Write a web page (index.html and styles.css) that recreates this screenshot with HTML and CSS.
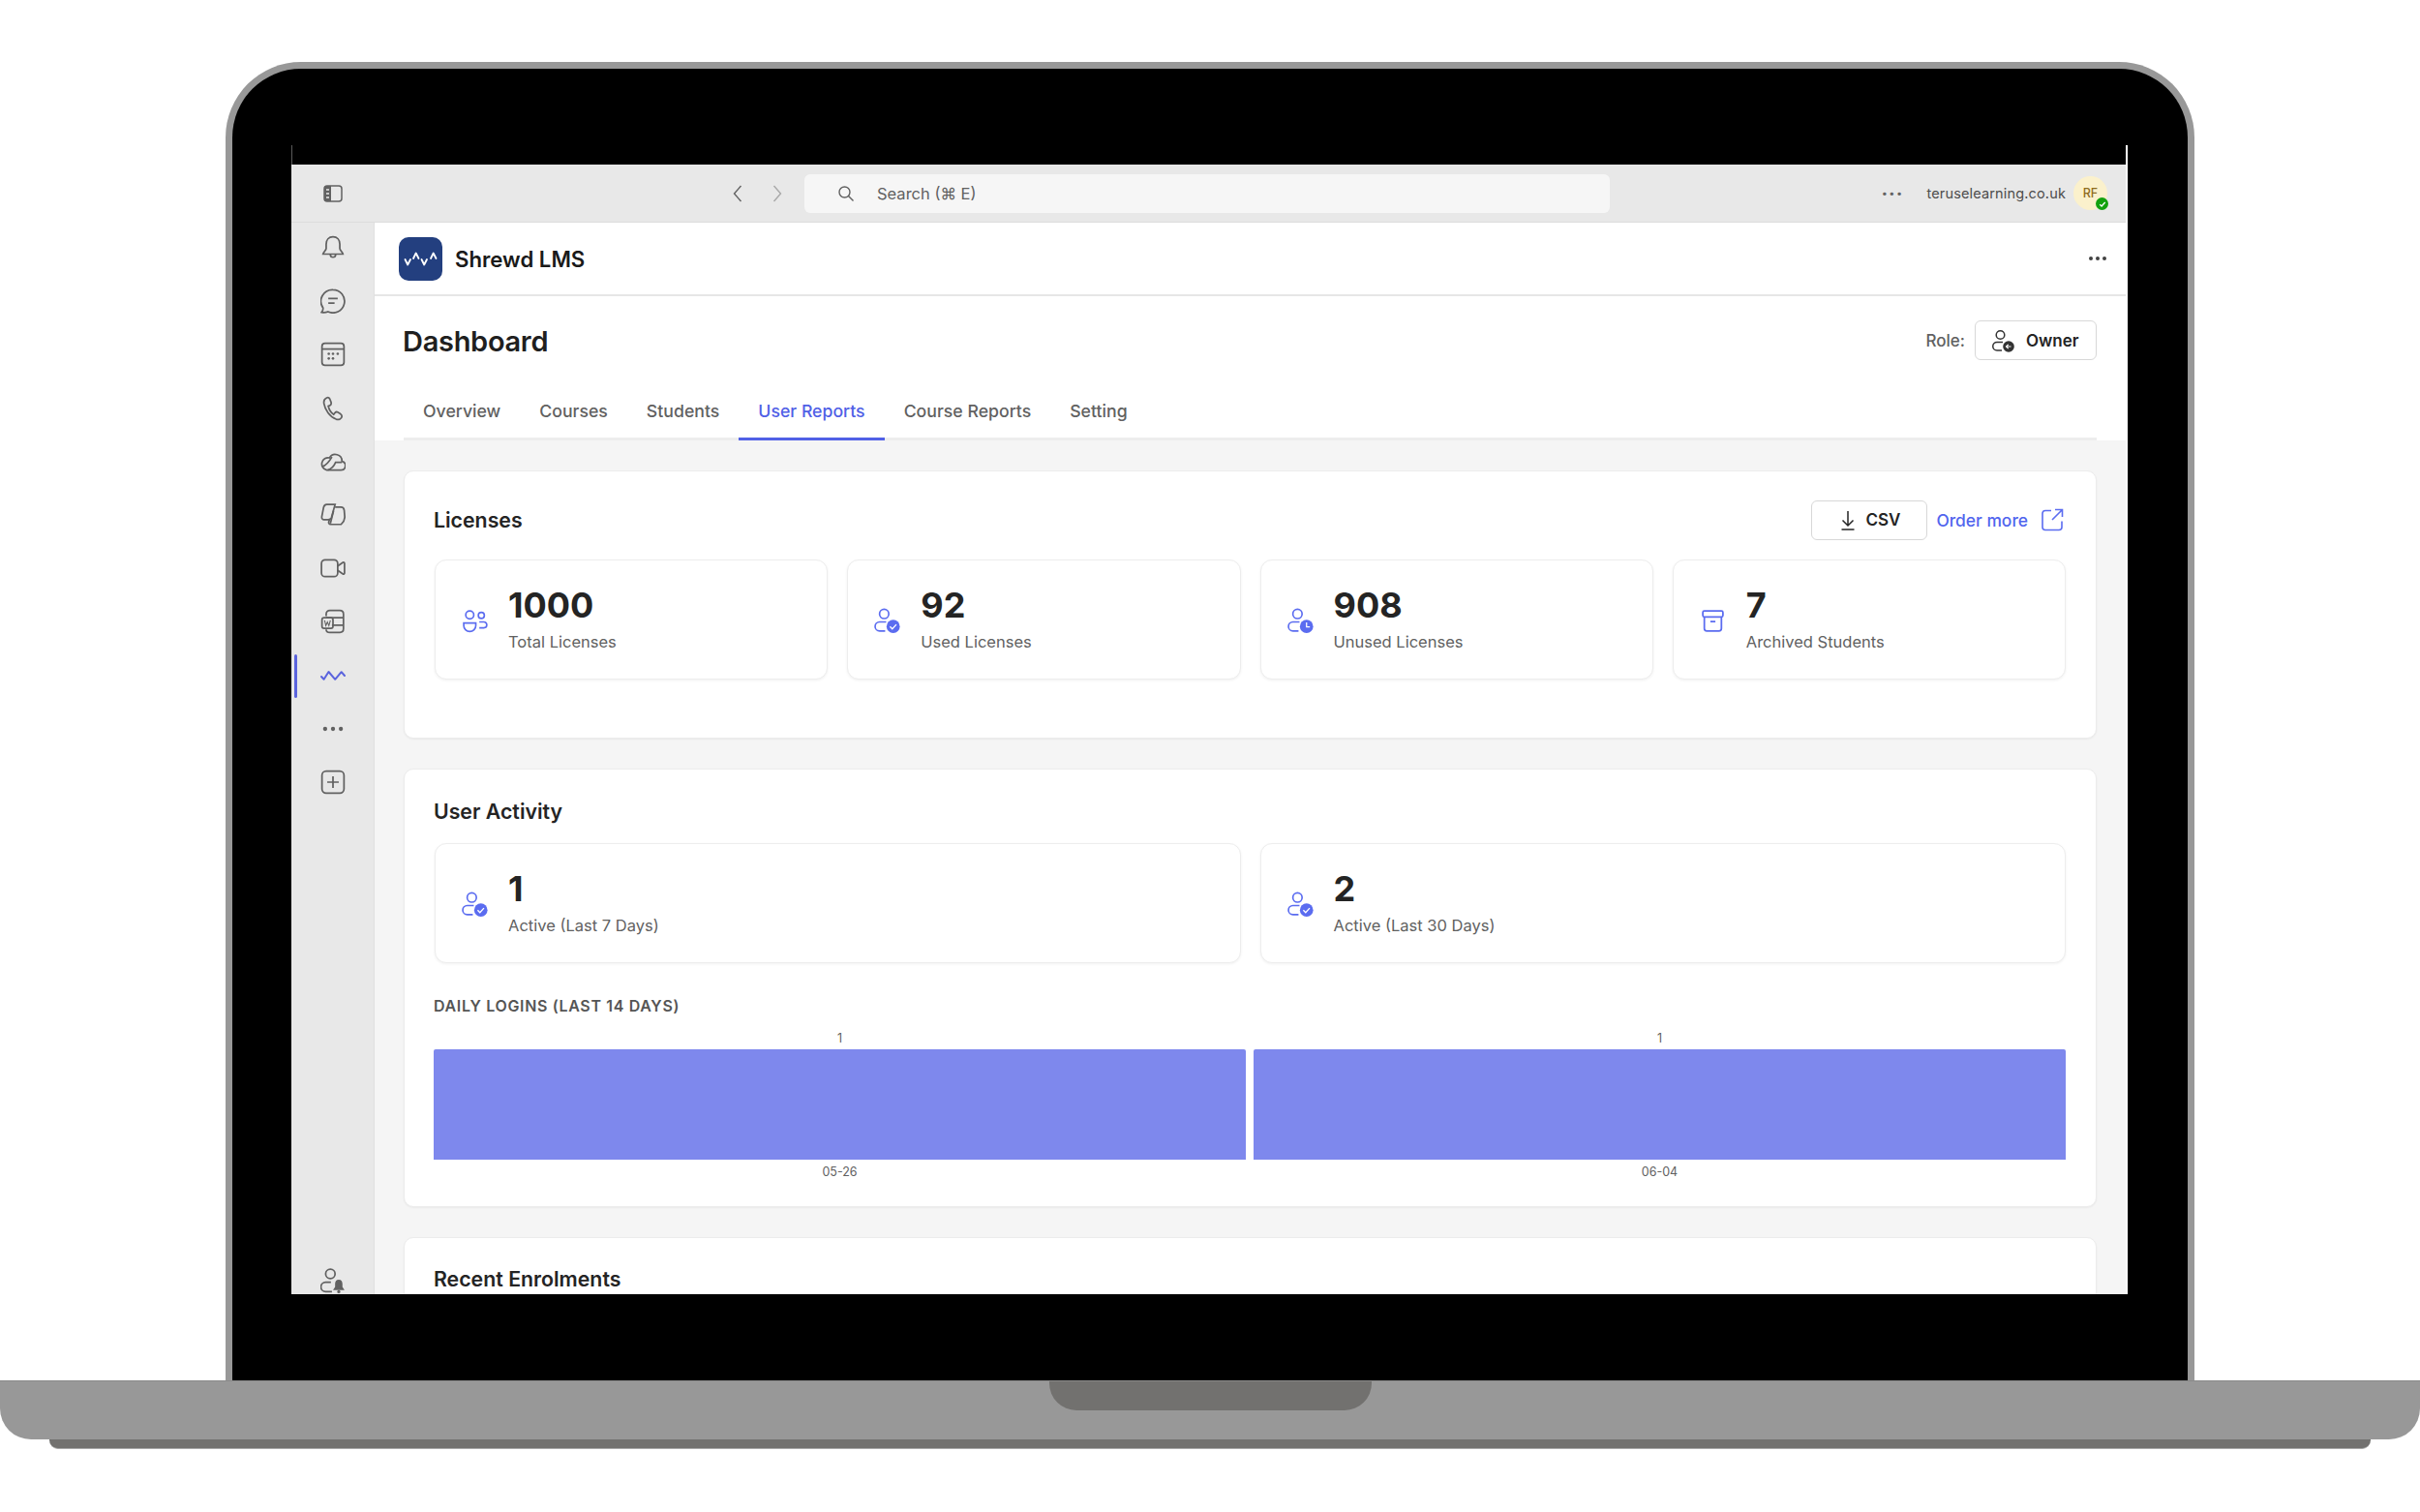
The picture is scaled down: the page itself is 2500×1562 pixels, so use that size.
FILE: index.html
```html
<!DOCTYPE html>
<html lang="en">
<head>
<meta charset="utf-8">
<title>Shrewd LMS</title>
<link rel="stylesheet" href="styles.css">
</head>
<body>
<svg class="defs" width="0" height="0" aria-hidden="true">
  <symbol id="user-check" viewBox="0 0 26 26">
    <circle cx="10" cy="6" r="4.6" fill="none" stroke="currentColor" stroke-width="1.6"/>
    <path d="M12 14H5.500a3.800 3.800 0 0 0 0 9H11" fill="none" stroke="currentColor" stroke-width="1.6"/>
    <circle cx="19" cy="18.500" r="6.600" fill="currentColor"/>
    <path d="M15.800 18.600l2.300 2.300 4-4.400" fill="none" stroke="#fff" stroke-width="1.300"/>
  </symbol>
</svg>
<div class="laptop">
  <div class="lid">
    <div class="camera-strip"></div>
    <div class="app">
      <header class="topbar">
        <div class="top-left">
          <div class="panel-toggle">
            <svg width="20" height="18" viewBox="0 0 20 18"><rect x="1" y="1" width="18" height="16" rx="3" fill="none" stroke="#616161" stroke-width="1.5"/><path d="M3 1h5v16H3a2 2 0 0 1-2-2V3a2 2 0 0 1 2-2z" fill="#616161"/><path d="M3 5h3M3 9h3M3 13h3" stroke="#e8e8e8" stroke-width="1.3"/></svg>
          </div>
          <div class="history">
            <svg width="12" height="20" viewBox="0 0 12 20"><path d="M9.500 2L2.500 10l7 8" fill="none" stroke="#616161" stroke-width="1.4"/></svg>
            <svg width="12" height="20" viewBox="0 0 12 20"><path d="M2.500 2l7 8-7 8" fill="none" stroke="#a8a8a8" stroke-width="1.4"/></svg>
          </div>
        </div>
        <div class="search">
          <svg width="18" height="18" viewBox="0 0 18 18"><circle cx="7.500" cy="7.500" r="5.500" fill="none" stroke="#616161" stroke-width="1.4"/><path d="M11.500 11.500l5 5" stroke="#616161" stroke-width="1.4"/></svg>
          <span>Search (⌘ E)</span>
        </div>
        <div class="top-right">
          <span class="thin-dots">···</span>
          <span class="tenant">teruselearning.co.uk</span>
          <div class="avatar">RF
            <span class="presence"><svg width="8" height="8" viewBox="0 0 8 8"><path d="M1.200 4.200l1.900 1.800 3.600-4" fill="none" stroke="#fff" stroke-width="1.3"/></svg></span>
          </div>
        </div>
      </header>
      <div class="body">
        <nav class="rail">
          <svg class="rail-icon" viewBox="0 0 24 24"><path d="M12 1.500c-4 0-6.500 3-6.500 7v4.200c0 1.600-2.500 3.300-3 5.300h19c-.5-2-3-3.700-3-5.300V8.500c0-4-2.500-7-6.500-7z"/><path d="M9.500 18.500a2.500 2.500 0 0 0 5 0"/></svg>
          <svg class="rail-icon" viewBox="0 0 24 24"><path d="M12 1.200a11 11 0 1 1-4.800 20.900c-2 .9-4 1-6 .6 1-1.300 1.500-2.800 1.300-4.200A11 11 0 0 1 12 1.200z"/><path d="M7.500 9.500h9M7.500 14h6"/></svg>
          <svg class="rail-icon" viewBox="0 0 24 24"><rect x="1.500" y="1.500" width="21" height="21" rx="3"/><path d="M1.500 7h21"/><g class="solid"><circle cx="8" cy="11.500" r="1.200"/><circle cx="12" cy="11.500" r="1.200"/><circle cx="16.500" cy="11.500" r="1.200"/><circle cx="8" cy="16" r="1.200"/><circle cx="12" cy="16" r="1.200"/></g></svg>
          <svg class="rail-icon" viewBox="0 0 24 24"><path d="M6 1.800c-2.200 1-3 3-2.600 5.500C4.300 13 9 20 15 22.200c2.500.8 5.300-.2 5.500-2.700.1-1.300-.8-2-1.800-2.700l-2.300-1.300c-1.200-.6-2.200 0-2.800 1l-.9 1.200c-2.500-1.500-4.500-5-5.200-8l1.500-.6c1.200-.6 1.500-1.800 1.200-3L9 3c-.5-1-1.700-1.800-3-1.200z"/></svg>
          <svg class="rail-icon" viewBox="0 0 24 24"><path d="M6 20h13.500a4.200 4.200 0 0 0 1-8.300 6.300 6.300 0 0 0-11.800-3.400A6 6 0 0 0 6 20z"/><path d="M2 16.500c3-.8 6-4 9-9M7 20c3-1 6-4 7.500-7.500l6 0"/></svg>
          <svg class="rail-icon" viewBox="0 0 24 24"><path d="M6 2h8l-3.500 12.500c-.5 1.500-1.500 2-3 2H3.500c-1.500 0-2.500-1.200-2.200-2.700L3 5c.4-2 1.500-3 3-3z"/><path d="M14 4.500h5.500c1.700 0 3 1.300 3.200 3l.5 6c.2 3-1 5-3.500 7.500h-10c-1.500 0-2-1.200-1.700-2.500l1-3"/><path d="M12.500 8l-3 12"/></svg>
          <svg class="rail-icon" viewBox="0 0 24 24"><rect x="1" y="4" width="15.500" height="16" rx="3.500"/><path d="M16.500 10l5-3.500c.7-.4 1.500 0 1.500.8v9.400c0 .8-.8 1.200-1.500.8l-5-3.500"/></svg>
          <svg class="rail-icon" viewBox="0 0 24 24"><path d="M5.500 7V5c0-2 1.500-3.500 3.500-3.500h9.500c2 0 3.500 1.500 3.500 3.500v14c0 2-1.500 3.500-3.500 3.500H9c-2 0-3.500-1-3.500-3M5.500 8.500H22M11 15.500h11"/><rect x="1.500" y="8.500" width="10.500" height="10" rx="2"/><path d="M4 11l1.200 5 1.500-3.500 1.400 3.500 1.400-5" stroke-width="1"/></svg>
          <div class="rail-active">
            <svg width="26" height="12" viewBox="0 0 26 12"><path d="M1 7l2.600 2.800L8.500 2l6.700 7.800L21.700 2.200 25 6" fill="none" stroke="#5b64dd" stroke-width="2" stroke-linecap="round" stroke-linejoin="round"/></svg>
          </div>
          <svg class="rail-icon" viewBox="0 0 24 24"><g class="solid"><circle cx="4.500" cy="12" r="2"/><circle cx="12" cy="12" r="2"/><circle cx="19.500" cy="12" r="2"/></g></svg>
          <svg class="rail-icon" viewBox="0 0 24 24"><rect x="1.500" y="1.500" width="21" height="21" rx="4"/><path d="M12 6.500v11M6.500 12h11"/></svg>
          <svg class="rail-icon rail-foot" viewBox="0 0 24 24"><circle cx="9.500" cy="5.500" r="4.500"/><path d="M10 13.500H5a4.500 4.500 0 0 0 0 9h6"/><g class="solid"><path d="M17.500 11c2.500 0 3.500 2 3.500 4v3l2 3H12l2-3v-3c0-2 1-4 3.500-4z"/><circle cx="17.500" cy="22.500" r="1.500"/></g></svg>
        </nav>
        <main class="main">
          <div class="app-header">
            <div class="brand">
              <div class="logo"><svg width="36" height="15" viewBox="0 0 36 15"><path d="M1.500 8l2.700 5.500L7 8M10 7l2.700-5.500L15.500 7M18.500 8l2.700 5.500L24 8M28 7l2.700-5.500L33.500 7" fill="none" stroke="#fff" stroke-width="1.800" stroke-linecap="round" stroke-linejoin="round"/></svg></div>
              <span class="brand-name">Shrewd LMS</span>
            </div>
            <span class="bold-dots"><i></i><i></i><i></i></span>
          </div>
          <div class="page-head">
            <div class="title-row">
              <h1>Dashboard</h1>
              <div class="role">
                <span>Role:</span>
                <button class="btn btn-owner">
                  <svg width="24" height="24" viewBox="0 0 24 24"><circle cx="9.500" cy="6" r="4.300" fill="none" stroke="#333" stroke-width="1.500"/><path d="M12 13.500H6a3.900 3.900 0 0 0 0 8.500h5" fill="none" stroke="#333" stroke-width="1.500"/><circle cx="18" cy="18" r="5.800" fill="#333"/><path d="M20.500 18h-4.800M17.700 15.800L15.500 18l2.200 2.200" fill="none" stroke="#fff" stroke-width="1.200"/></svg>
                  Owner
                </button>
              </div>
            </div>
            <div class="tabs">
              <a class="tab">Overview</a>
              <a class="tab">Courses</a>
              <a class="tab">Students</a>
              <a class="tab tab-active">User Reports</a>
              <a class="tab">Course Reports</a>
              <a class="tab">Setting</a>
            </div>
          </div>
          <div class="content">
            <section class="panel panel-licenses">
              <div class="panel-head">
                <h2>Licenses</h2>
                <div class="panel-actions">
                  <button class="btn btn-csv">
                    <svg width="20" height="24" viewBox="0 0 20 24"><path d="M10 3v15M4.500 12.500L10 18l5.500-5.500M3.500 22h13" fill="none" stroke="#242424" stroke-width="1.500"/></svg>
                    CSV
                  </button>
                  <a class="order-more">Order more
                    <svg width="24" height="24" viewBox="0 0 24 24"><path d="M11 2.500H5a3 3 0 0 0-3 3v14a3 3 0 0 0 3 3h14a3 3 0 0 0 3-3v-6M15 1.500h7.500V9M22.500 1.500L12 12" fill="none" stroke="#5b6cf0" stroke-width="1.600"/></svg>
                  </a>
                </div>
              </div>
              <div class="stats stats-4">
                <div class="stat">
                  <svg class="stat-icon" viewBox="0 0 26 26"><circle cx="8" cy="7" r="4" fill="none" stroke="currentColor" stroke-width="1.600"/><circle cx="19.500" cy="7.500" r="3" fill="none" stroke="currentColor" stroke-width="1.600"/><path d="M2 15h12v2.500a6 6 0 0 1-12 0zM17.500 14h4.500a2.800 2.800 0 0 1 0 5.800h-4.500" fill="none" stroke="currentColor" stroke-width="1.600"/></svg>
                  <div class="stat-text"><div class="stat-num">1000</div><div class="stat-label">Total Licenses</div></div>
                </div>
                <div class="stat">
                  <svg class="stat-icon"><use href="#user-check"/></svg>
                  <div class="stat-text"><div class="stat-num">92</div><div class="stat-label">Used Licenses</div></div>
                </div>
                <div class="stat">
                  <svg class="stat-icon" viewBox="0 0 26 26"><circle cx="10" cy="6" r="4.600" fill="none" stroke="currentColor" stroke-width="1.600"/><path d="M12 14H5.500a3.800 3.800 0 0 0 0 9H11" fill="none" stroke="currentColor" stroke-width="1.600"/><circle cx="19" cy="18.500" r="6.600" fill="currentColor"/><path d="M19 14.500v4.300h3.300" fill="none" stroke="#fff" stroke-width="1.200"/></svg>
                  <div class="stat-text"><div class="stat-num">908</div><div class="stat-label">Unused Licenses</div></div>
                </div>
                <div class="stat">
                  <svg class="stat-icon" viewBox="0 0 26 26"><rect x="3" y="3" width="20" height="6" rx="1.500" fill="none" stroke="currentColor" stroke-width="1.700"/><path d="M4.500 9v11.500a2.500 2.500 0 0 0 2.500 2.500h12a2.500 2.500 0 0 0 2.500-2.500V9M10.500 13.500h5" fill="none" stroke="currentColor" stroke-width="1.700"/></svg>
                  <div class="stat-text"><div class="stat-num">7</div><div class="stat-label">Archived Students</div></div>
                </div>
              </div>
            </section>
            <section class="panel panel-activity">
              <h2>User Activity</h2>
              <div class="stats stats-2">
                <div class="stat">
                  <svg class="stat-icon"><use href="#user-check"/></svg>
                  <div class="stat-text"><div class="stat-num">1</div><div class="stat-label">Active (Last 7 Days)</div></div>
                </div>
                <div class="stat">
                  <svg class="stat-icon"><use href="#user-check"/></svg>
                  <div class="stat-text"><div class="stat-num">2</div><div class="stat-label">Active (Last 30 Days)</div></div>
                </div>
              </div>
              <h3 class="chart-title">DAILY LOGINS (LAST 14 DAYS)</h3>
              <div class="chart">
                <div class="chart-col"><span class="chart-val">1</span><div class="chart-bar"></div><span class="chart-date">05-26</span></div>
                <div class="chart-col"><span class="chart-val">1</span><div class="chart-bar"></div><span class="chart-date">06-04</span></div>
              </div>
            </section>
            <section class="panel panel-recent">
              <h2>Recent Enrolments</h2>
            </section>
          </div>
        </main>
      </div>
    </div>
  </div>
  <div class="base"><div class="notch"></div></div>
  <div class="tray"></div>
</div>
</body>
</html>
```

FILE: styles.css
```css
* { box-sizing: border-box; }
html, body { margin: 0; padding: 0; background: #fff; }
body { font-family: "Inter", "DejaVu Sans", sans-serif; color: #242424; width: 2500px; height: 1562px; overflow: hidden; }
.defs { position: absolute; }
h1, h2, h3 { margin: 0; }
button { font-family: inherit; }

.laptop { padding-top: 64px; }
.lid {
  width: 2034px; height: 1362px; margin-left: 233px;
  background: #000;
  border: 7px solid #989898; border-bottom: 0;
  border-radius: 78px 78px 0 0;
  padding: 79px 62px 0 61px;
}
.camera-strip { height: 20px; border-left: 1px solid #5a5a5a; border-right: 2px solid #fff; }
.app { height: 1167px; border-right: 2px solid #fff; display: flex; flex-direction: column; overflow: hidden; background: #f5f5f5; }
.base { height: 61px; background: #989898; border-radius: 0 0 32px 32px; border-top: 1px solid #8a8a8a; display: flex; justify-content: center; }
.notch { width: 333px; height: 30px; background: #72716f; border-radius: 0 0 28px 28px; }
.tray { height: 10px; margin: 0 51px; background: #72716f; border-radius: 0 0 9px 9px; border-bottom: 1px solid #a8a8a8; }

.topbar { height: 60px; flex: none; background: #e8e8e8; border-bottom: 1px solid #dcdcdc; display: grid; grid-template-columns: 530px 832px 1fr; align-items: center; }
.top-left { display: flex; align-items: center; justify-content: space-between; padding-right: 22px; }
.panel-toggle { width: 86px; display: flex; justify-content: center; }
.history { display: flex; gap: 29px; }
.search { height: 40px; background: #f6f6f6; border-radius: 6px; display: flex; align-items: center; gap: 23px; padding-left: 34px; font-size: 16.500px; color: #616161; }
.top-right { display: flex; align-items: center; justify-content: flex-end; padding-right: 19px; }
.thin-dots { font-size: 20px; color: #616161; margin-right: 24px; letter-spacing: 1px; line-height: 1; font-weight: 700; }
.tenant { font-size: 14.500px; color: #4d4d4d; margin-right: 8px; letter-spacing: .15px; }
.avatar { position: relative; width: 35px; height: 35px; border-radius: 50%; background: #fbf1cc; color: #8f6c1f; font-size: 12.500px; font-weight: 500; display: flex; align-items: center; justify-content: center; }
.presence { position: absolute; right: -1px; bottom: 0; width: 13px; height: 13px; border-radius: 50%; background: #13a10e; display: flex; align-items: center; justify-content: center; }

.body { flex: 1; display: flex; min-height: 0; }
.rail { width: 86px; flex: none; background: #e8e8e8; border-right: 1px solid #e0e0e0; display: flex; flex-direction: column; align-items: center; padding: 13px 0 1px; gap: 29.200px; }
.rail-icon { width: 26px; height: 26px; flex: none; fill: none; stroke: #616161; stroke-width: 1.600; }
.rail-icon .solid { fill: #616161; stroke: none; }
.rail-active { position: relative; height: 26px; width: 100%; flex: none; display: flex; align-items: center; justify-content: center; }
.rail-active::before { content: ""; position: absolute; left: 3px; top: -9px; width: 3px; height: 45px; background: #5b64dd; border-radius: 2px; }
.rail-foot { margin-top: auto; }

.main { flex: 1; min-width: 0; display: flex; flex-direction: column; background: #f5f5f5; }
.app-header { height: 76px; flex: none; background: #fff; border-bottom: 2px solid #e6e6e6; display: flex; align-items: center; justify-content: space-between; padding: 0 20px 0 25px; }
.brand { display: flex; align-items: center; gap: 13px; }
.logo { width: 45px; height: 45px; border-radius: 10px; background: #233f7f; display: flex; align-items: center; justify-content: center; }
.brand-name { font-size: 22.200px; font-weight: 600; color: #1a1a1a; }
.bold-dots { display: flex; gap: 2.500px; }
.bold-dots i { width: 4.500px; height: 4.500px; border-radius: 50%; background: #424242; display: block; }

.page-head { flex: none; height: 149px; background: #fff; padding: 25px 30px 0; }
.title-row { height: 41px; display: flex; align-items: center; justify-content: space-between; }
h1 { font-size: 29px; font-weight: 600; letter-spacing: -.3px; color: #1f1f1f; margin: 2px 0 0 -1px; }
.role { display: flex; align-items: center; gap: 10px; font-size: 17px; color: #616161; font-weight: 500; }
.btn { height: 41px; background: #fff; border: 1px solid #d8d8d8; border-radius: 6px; display: flex; align-items: center; font-size: 17px; font-weight: 600; color: #242424; padding: 0; }
.btn-owner { width: 126px; padding-left: 16px; gap: 12px; }
.tabs { display: flex; margin-top: 27px; height: 56px; border-bottom: 3px solid #ededed; }
.tab { padding: 0 20px 3px; font-size: 17.700px; color: #616161; font-weight: 500; display: flex; align-items: center; height: 56px; border-bottom: 3px solid transparent; }
.tab-active { color: #5060e6; border-bottom-color: #5060e6; }

.content { flex: 1; padding: 31px 30px 0; display: flex; flex-direction: column; gap: 31px; min-height: 0; }
.panel { background: #fff; border: 1px solid #ececec; border-radius: 10px; box-shadow: 0 1px 2px rgba(0,0,0,.05); padding: 30px 31px; flex: none; }
.panel-licenses { height: 277px; }
.panel-activity { height: 453px; padding-top: 29px; }
.panel-recent { height: 200px; padding-top: 28px; }
h2 { font-size: 21.300px; font-weight: 600; color: #242424; line-height: 28px; margin-left: -1px; }
.panel-head { height: 40px; display: flex; align-items: center; justify-content: space-between; }
.panel-actions { display: flex; align-items: center; gap: 9px; }
.btn-csv { width: 120px; height: 41px; justify-content: center; gap: 8px; }
.order-more { display: flex; align-items: center; gap: 13px; font-size: 17.400px; font-weight: 500; color: #5165ee; margin-right: 2px; }

.stats { display: grid; gap: 20px; }
.stats-4 { grid-template-columns: repeat(4, 1fr); margin-top: 21px; }
.stats-2 { grid-template-columns: repeat(2, 1fr); margin-top: 19px; }
.stat { height: 124px; background: #fff; border: 1px solid #ededed; border-radius: 12px; box-shadow: 0 1px 3px rgba(0,0,0,.06); display: flex; align-items: center; padding: 0 26px 0 27px; gap: 21px; }
.stat-icon { width: 27px; height: 27px; color: #5b6cf0; flex: none; margin-top: 2px; }
.stat-text { display: flex; flex-direction: column; margin-top: -2px; }
.stat-num { font-size: 36px; font-weight: 700; line-height: 44px; color: #242424; }
.stat-label { font-size: 16.500px; line-height: 24px; color: #616161; margin-top: 4px; }

.chart-title { margin-top: 34px; margin-left: -1px; font-size: 16px; line-height: 20px; font-weight: 600; letter-spacing: .65px; color: #555; }
.chart { display: grid; grid-template-columns: 1fr 1fr; gap: 8px; margin: 16px 0 0 -1px; }
.chart-col { display: flex; flex-direction: column; align-items: center; font-size: 12.500px; color: #616161; line-height: 16px; }
.chart-bar { width: 100%; height: 114px; margin: 3px 0 5px; background: #7e88ed; border-radius: 2px 2px 0 0; }
```
